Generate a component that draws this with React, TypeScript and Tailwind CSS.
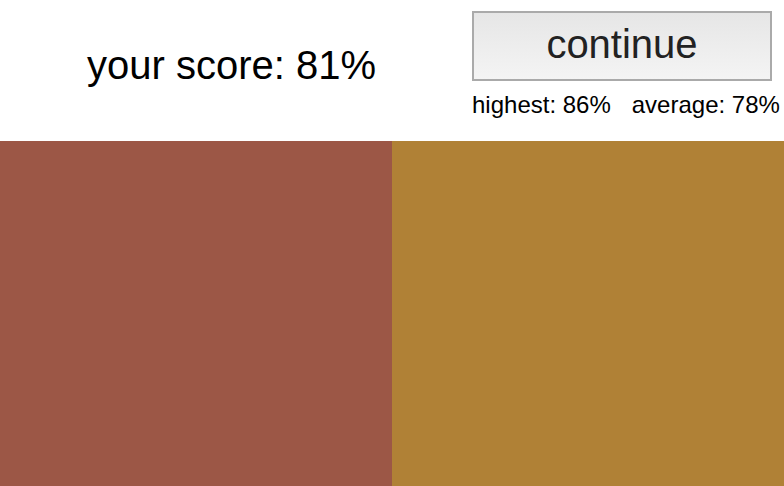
export default function App() {
  return (
    <div className="w-[784px] h-[486px] flex flex-col bg-white" style={{ fontFamily: '"Liberation Sans", Arial, sans-serif' }}>
      <div className="h-[141px] flex">
        <div className="w-[463px] flex items-center justify-center pb-[12px]">
          <span className="text-[40px] text-black leading-none">your score: 81%</span>
        </div>
        <div className="flex flex-col pt-[11px] pl-[9px]">
          <button className="w-[300px] h-[70px] border-2 border-[#aaaaaa] bg-gradient-to-b from-[#e6e6e6] to-[#f4f4f4] text-[40px] text-[#222222] leading-none flex items-center justify-center pb-[4px]">
            continue
          </button>
          <div className="mt-[12px] text-[24px] leading-none text-black whitespace-nowrap flex gap-[21px]">
            <span>highest: 86%</span>
            <span>average: 78%</span>
          </div>
        </div>
      </div>
      <div className="flex flex-1">
        <div className="w-[392px] bg-[#9c5746]" />
        <div className="flex-1 bg-[#b08136]" />
      </div>
    </div>
  );
}
